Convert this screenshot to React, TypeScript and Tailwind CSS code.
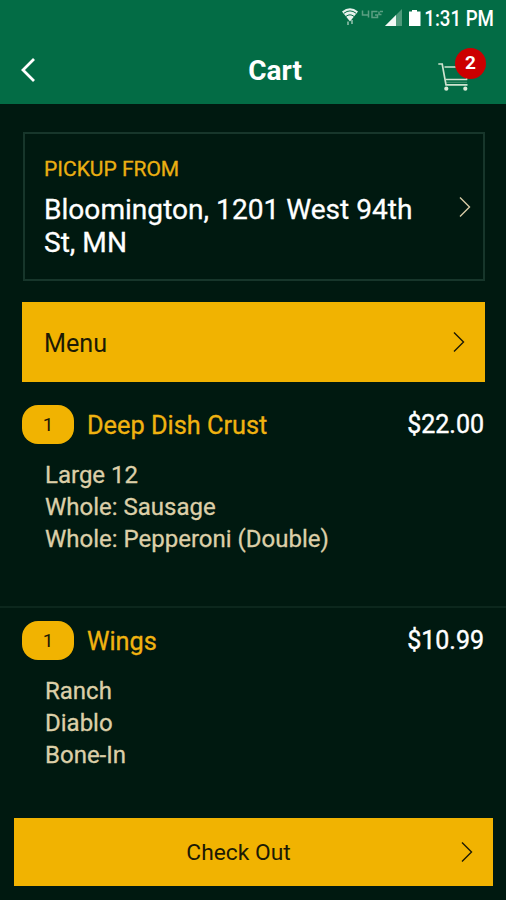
type CartItem = {
  name: string;
  quantity: number;
  price: string;
  details: string[];
};

const cartItems: CartItem[] = [
  {
    name: "Deep Dish Crust",
    quantity: 1,
    price: "$22.00",
    details: ["Large 12", "Whole: Sausage", "Whole: Pepperoni (Double)"],
  },
  {
    name: "Wings",
    quantity: 1,
    price: "$10.99",
    details: ["Ranch", "Diablo", "Bone-In"],
  },
];

function ChevronRight({ className }: { className?: string }) {
  return (
    <svg
      viewBox="0 0 14 22"
      fill="none"
      stroke="currentColor"
      strokeWidth="1.4"
      className={`h-[22px] w-3.5 shrink-0 ${className ?? ""}`}
    >
      <path d="M2 1.5 11.5 11 2 20.5" />
    </svg>
  );
}

function StatusBar() {
  return (
    <div className="flex h-9 items-center justify-end pr-3 text-white">
      <svg width="84" height="22" viewBox="0 0 84 22" fill="none">
        {/* wifi */}
        <path d="M0 4.500Q8 -2 16 4.500L8 14.500z" fill="#e6f2ec" />
        <g stroke="#036c45" strokeWidth="1">
          <path d="M2 6.200Q8 1.600 14 6.200" />
          <path d="M4 9.400Q8 6.200 12 9.400" />
        </g>
        <path d="M6 14.500v3.500M10 13v4" stroke="#8fbfa9" strokeWidth="1.6" />
        {/* 4G LTE */}
        <g stroke="#5b9f82" strokeWidth="1.5">
          <path d="M20.500 3.500v4.500h6.500M26.500 3.500v7" />
          <path d="M35.500 4.600H30v5.800h5.500V8h-2.500" />
          <path d="M37 4.500v3h2.500M38 4.500h3" />
        </g>
        {/* signal */}
        <path d="M43 19 60 2v17z" fill="#4f9a7b" />
        <path d="M43 19 54 8v11z" fill="#f2f8f5" />
        {/* battery */}
        <path d="M67 4.500h3V3h5v1.500h3.500V19H67z" fill="#fff" />
      </svg>
      <span className="flex w-[68px] justify-end">
        <span className="origin-right scale-x-[0.83] text-[22.5px] leading-none font-medium whitespace-nowrap">
          1:31 PM
        </span>
      </span>
    </div>
  );
}

function CartButton({ count }: { count: number }) {
  return (
    <button className="relative h-12 w-14">
      <svg
        width="36"
        height="32"
        viewBox="0 0 36 32"
        fill="none"
        stroke="#cfe3cf"
        strokeWidth="1.7"
        className="absolute top-3 left-1.5"
      >
        <path d="M2.300 4H6.200L10 24.800H31.500" />
        <path d="M8.500 7H33L30.500 19.500H9.500" />
        <path d="M10 22.300H31" strokeWidth="0.8" opacity="0.4" />
        <circle cx="10.300" cy="28.700" r="2.100" fill="#dcebd9" stroke="none" />
        <circle cx="29.300" cy="28.700" r="2.100" fill="#dcebd9" stroke="none" />
      </svg>
      <span className="absolute top-0 right-0 flex size-[31px] items-center justify-center rounded-full bg-[#cc0000] text-[19px] font-bold text-white">
        {count}
      </span>
    </button>
  );
}

function Header() {
  return (
    <header className="h-[104px] shrink-0 bg-[#036c45]">
      <StatusBar />
      <div className="flex items-start pt-3 pr-5 pl-[19px]">
        <button aria-label="Back" className="mt-[9px]">
          <svg
            width="17"
            height="26"
            viewBox="0 0 17 26"
            fill="none"
            stroke="#fff"
            strokeWidth="2.8"
          >
            <path d="M15 2 4 13l11 11" />
          </svg>
        </button>
        <h1 className="mt-[3px] flex-1 pl-[84px] text-center text-[28px] leading-10 font-bold text-white">
          Cart
        </h1>
        <CartButton count={2} />
      </div>
    </header>
  );
}

function CartRow({ item }: { item: CartItem }) {
  return (
    <li className="h-[216px] border-b-2 border-[#0c271d] px-[22px] pt-[13px] last:border-b-0">
      <div className="flex items-center">
        <span className="flex h-[39px] w-[52px] items-center justify-center rounded-[16px] bg-[#f1b301] pt-0.5 text-[19px] text-[#1c1a05]">
          {item.quantity}
        </span>
        <h2 className="ml-[13px] pt-0.5 text-[25.3px] leading-none text-[#f0b310] [-webkit-text-stroke:0.3px]">
          {item.name}
        </h2>
        <span className="ml-auto text-[25px] leading-none text-white [-webkit-text-stroke:0.4px]">
          {item.price}
        </span>
      </div>
      <ul className="mt-[15px] ml-[23px] text-[24px] leading-8 text-[#dccfa8] [-webkit-text-stroke:0.3px]">
        {item.details.map((detail) => (
          <li key={detail}>{detail}</li>
        ))}
      </ul>
    </li>
  );
}

export default function App() {
  return (
    <main className="flex h-[900px] w-[506px] flex-col overflow-hidden bg-[#001910] font-[Roboto,sans-serif]">
      <Header />

      <section className="mt-7 mr-[21px] ml-[23px] flex h-[149px] shrink-0 items-center justify-between border-2 border-[#17362b] pr-[11px] pl-[19px]">
        <div className="[-webkit-text-stroke:0.3px]">
          <p className="text-[21px] leading-7 text-[#eaaf12]">PICKUP FROM</p>
          <p className="mt-2.5 w-[380px] text-[28.1px] leading-[33px] text-white">
            Bloomington, 1201 West 94th St, MN
          </p>
        </div>
        <ChevronRight className="text-[#d6cba6]" />
      </section>

      <button className="mt-[21px] mr-[21px] ml-[22px] flex h-20 shrink-0 items-center justify-between bg-[#f1b301] pr-[19px] pl-[22px] text-[25.2px] text-[#1c1a05]">
        <span className="pt-[3px]">Menu</span>
        <ChevronRight />
      </button>

      <ul className="mt-[10px] h-[420px] shrink-0">
        {cartItems.map((item) => (
          <CartRow key={item.name} item={item} />
        ))}
      </ul>

      <button className="mt-1.5 mr-[13px] ml-3.5 flex h-[68px] shrink-0 items-center bg-[#f1b301] pr-[19px] pl-[3px] text-[22.8px] text-[#1c1a05]">
        <span className="flex-1 pt-[3px] text-center">Check Out</span>
        <ChevronRight />
      </button>
    </main>
  );
}
